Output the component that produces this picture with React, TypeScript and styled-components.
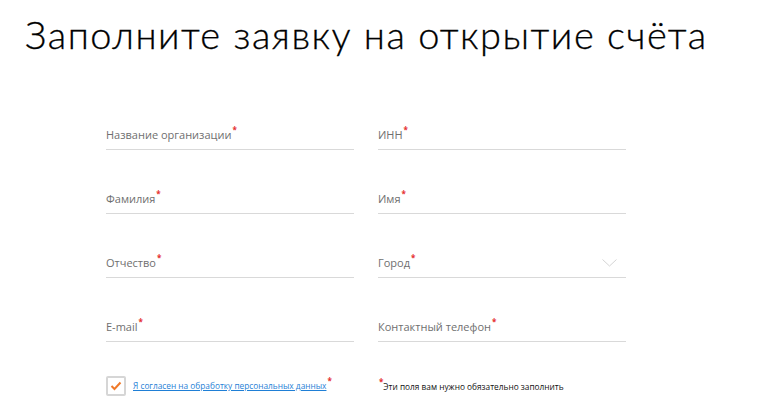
import React from "react";
import styled, { createGlobalStyle } from "styled-components";

const Global = createGlobalStyle`
  html, body { margin: 0; padding: 0; background: #fff; }
  body { font-family: "Open Sans", "Liberation Sans", sans-serif; }
`;

const Page = styled.div`
  width: 763px;
  height: 415px;
  overflow: hidden;
  box-sizing: border-box;
  padding-top: 10px;
`;

const Title = styled.h1`
  margin: 0 0 0 25px;
  font-family: "Lato", "Liberation Sans", sans-serif;
  font-weight: 300;
  font-size: 38px;
  line-height: 48px;
  color: #000;
  letter-spacing: 1.5px;
  -webkit-text-stroke: 0.3px #000;
`;

const Form = styled.form`
  margin: 46px 0 0 106px;
  display: grid;
  grid-template-columns: 248px 248px;
  column-gap: 24px;
  row-gap: 18px;
`;

const Field = styled.label`
  position: relative;
  display: flex;
  align-items: flex-end;
  height: 46px;
  border-bottom: 1px solid #d9d9d9;
  box-sizing: border-box;
  padding-bottom: 7px;
`;

const Label = styled.span`
  font-size: 11px;
  line-height: 14px;
  color: #6f6f6f;
`;

const Star = styled.sup`
  color: #e53030;
  font-size: 8px;
  font-weight: 700;
  line-height: 0;
  position: relative;
  top: -1px;
  margin-left: 1px;
`;

const Chevron = styled.svg`
  position: absolute;
  right: 9px;
  bottom: 10px;
`;

const Footer = styled.div`
  margin: 34px 0 0 106px;
  display: grid;
  grid-template-columns: 272px 248px;
  align-items: center;
`;

const Agree = styled.div`
  display: flex;
  align-items: center;
  gap: 7px;
`;

const Box = styled.span`
  width: 16px;
  height: 16px;
  border: 2px solid #d6d6d6;
  border-radius: 2px;
  display: flex;
  align-items: center;
  justify-content: center;
`;

const LinkWrap = styled.span`
  font-size: 8.3px;
  line-height: 12px;
`;

const Link = styled.a`
  color: #1f7fd6;
  text-decoration: underline;
`;

const Note = styled.span`
  font-size: 8.3px;
  color: #111;
  line-height: 12px;
  margin-top: 2px;
`;

const fields = [
  "Название организации",
  "ИНН",
  "Фамилия",
  "Имя",
  "Отчество",
  "Город",
  "E-mail",
  "Контактный телефон",
];

export default function App() {
  return (
    <Page>
      <Global />
      <Title>Заполните заявку на открытие счёта</Title>
      <Form>
        {fields.map((f) => (
          <Field key={f}>
            <Label>
              {f}
              <Star>*</Star>
            </Label>
            {f === "Город" && (
              <Chevron width="15" height="8" viewBox="0 0 15 8">
                <path d="M0.5 0.5 L7.5 7 L14.5 0.5" fill="none" stroke="#d4d4d4" strokeWidth="1" />
              </Chevron>
            )}
          </Field>
        ))}
      </Form>
      <Footer>
        <Agree>
          <Box>
            <svg width="12" height="10" viewBox="0 0 12 10">
              <path d="M1.5 5 L4.5 8 L10.5 1.5" fill="none" stroke="#f07a2a" strokeWidth="2" />
            </svg>
          </Box>
          <LinkWrap>
            <Link href="#">Я согласен на обработку персональных данных</Link>
            <Star>*</Star>
          </LinkWrap>
        </Agree>
        <Note>
          <Star>*</Star>Эти поля вам нужно обязательно заполнить
        </Note>
      </Footer>
    </Page>
  );
}
